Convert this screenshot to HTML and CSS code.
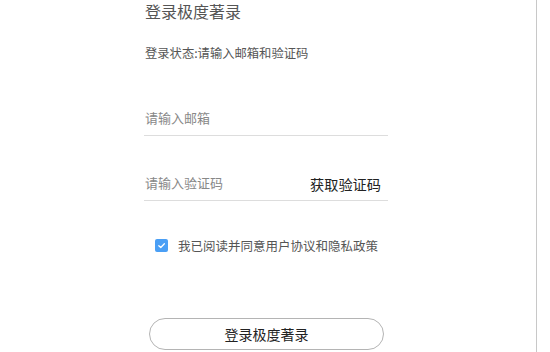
FILE: index.html
```html
<!DOCTYPE html>
<html>
<head>
<meta charset="UTF-8">
<meta name="viewport" content="width=device-width, initial-scale=1">
<title>登录极度著录</title>
<link rel="stylesheet" href="styles.css">
</head>
<body>
<div class="page">
	<div class="login-panel">
		<div class="login-form">
			<h2 class="login-title">登录极度著录</h2>
			<p class="login-status">登录状态:请输入邮箱和验证码</p>
			<div class="field">
				<input class="field-input" type="text" placeholder="请输入邮箱">
			</div>
			<div class="field field-code">
				<input class="field-input" type="text" placeholder="请输入验证码">
				<a class="get-code" href="#">获取验证码</a>
			</div>
			<label class="agree">
				<span class="agree-box">
					<svg width="9" height="9" viewBox="0 0 10 10"><path d="M2 5.2 L4.2 7.2 L8.2 3" fill="none" stroke="#fff" stroke-width="1.4" stroke-linecap="round" stroke-linejoin="round"/></svg>
				</span>
				<span class="agree-text">我已阅读并同意用户协议和隐私政策</span>
			</label>
			<button class="login-btn" type="button">登录极度著录</button>
		</div>
	</div>
</div>
</body>
</html>
```
FILE: styles.css
```css
*{
	margin:0;
	padding:0;
	box-sizing:border-box;
}
body{
	font-family:"Noto Sans CJK SC","Noto Sans",sans-serif;
	background:#fff;
	color:#444;
}
a{
	text-decoration:none;
}
.page{
	display:flex;
	height:352px;
	overflow:hidden;
}
.login-panel{
	width:537px;
	height:100%;
	border-right:1px solid #c8c8c8; /* 右侧分隔线 */
}
.login-form{
	width:244px;
	margin-left:144px;
	display:flex;
	flex-direction:column;
}
.login-title{
	font-size:16px;
	font-weight:400;
	line-height:22px;
	color:#555;
	padding-left:1px;
}
.login-status{
	font-size:12.3px;
	line-height:20px;
	margin-top:21px;
	color:#555;
	padding-left:1px;
}
/* 输入框 */
.field{
	display:flex;
	align-items:center;
	height:35px;
	margin-top:38px;
	border-bottom:1px solid #ddd;
}
.field-code{
	margin-top:30px;
}
.field-input{
	flex:1;
	min-width:0;
	height:34px;
	border:none;
	outline:none;
	background:transparent;
	font-family:inherit;
	font-size:13px;
	color:#333;
	padding-left:1px;
	margin-top:-2px;
}
.field-input::placeholder{
	color:#888;
}
.get-code{
	font-size:14.2px;
	color:#222;
	margin-right:7px;
	margin-top:2px;
}
/* 协议 */
.agree{
	display:flex;
	align-items:center;
	height:20px;
	margin-top:34px;
	padding-left:11px;
}
.agree-box{
	width:13px;
	height:13px;
	border-radius:2px;
	background:#4a9ff5;
	display:flex;
	align-items:center;
	justify-content:center;
	margin-right:10px;
}
.agree-text{
	font-size:12.5px;
	color:#555;
}
.login-btn{
	width:235px;
	height:32px;
	margin-top:63px;
	margin-left:5px;
	border:1px solid #b4b4b4;
	border-radius:16px;
	background:#fff;
	font-family:inherit;
	font-size:14px;
	color:#222;
}
```
